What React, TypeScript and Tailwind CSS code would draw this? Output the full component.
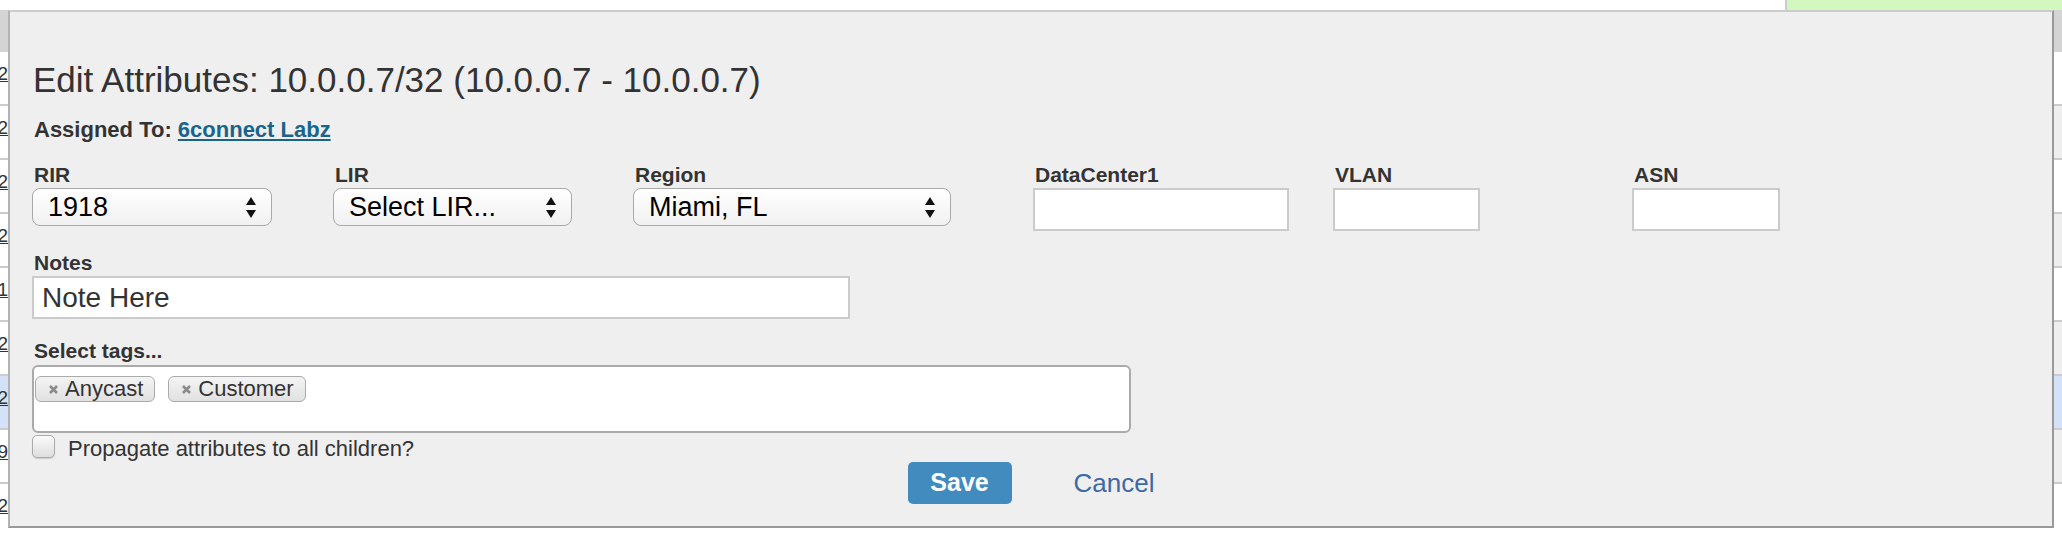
import type { ReactNode } from "react";

const rowDigits = ["2", "2", "2", "2", "1", "2", "2", "9", "2"];

const columns = [
  { label: "RIR", kind: "select", value: "1918", w: "w-[301px]", ctl: "w-[240px]" },
  { label: "LIR", kind: "select", value: "Select LIR...", w: "w-[300px]", ctl: "w-[239px]" },
  { label: "Region", kind: "select", value: "Miami, FL", w: "w-[400px]", ctl: "w-[318px]" },
  { label: "DataCenter1", kind: "input", value: "", w: "w-[300px]", ctl: "w-[256px]" },
  { label: "VLAN", kind: "input", value: "", w: "w-[299px]", ctl: "w-[147px]" },
  { label: "ASN", kind: "input", value: "", w: "w-[200px]", ctl: "w-[148px]" },
];

function Label({ children }: { children: ReactNode }) {
  return (
    <div className="h-[24px] pl-[2px] text-[21px] leading-[24px] font-bold text-[#333]">
      {children}
    </div>
  );
}

function UpDown() {
  return (
    <svg width="12" height="23" viewBox="0 0 12 23" className="shrink-0">
      <polygon points="6,1 11,9 1,9" fill="#111" />
      <polygon points="1,14 11,14 6,22" fill="#111" />
    </svg>
  );
}

function FakeSelect({ value, width }: { value: string; width: string }) {
  return (
    <div
      className={`${width} flex h-[38px] items-center justify-between rounded-[8px] border border-[#a9a9a9] bg-linear-to-b from-white to-[#f1f1f1] pl-[15px] pr-[14px] text-[27px] leading-none text-black`}
    >
      <span>{value}</span>
      <UpDown />
    </div>
  );
}

function Chip({ text }: { text: string }) {
  return (
    <div className="flex h-[26px] items-center gap-[6px] rounded-[6px] border border-[#aaaaaa] bg-linear-to-b from-[#f4f4f4] to-[#e1e1e1] pl-[12px] pr-[11px] text-[22px] leading-none text-[#333]">
      <svg width="11" height="11" viewBox="0 0 11 11">
        <path d="M2 2 L9 9 M9 2 L2 9" stroke="#8a8a8a" strokeWidth="2.6" />
      </svg>
      <span>{text}</span>
    </div>
  );
}

export default function App() {
  return (
    <div className="relative h-[536px] w-[2062px] overflow-hidden bg-white font-['Liberation_Sans',Arial,sans-serif]">
      {/* page behind the dialog */}
      <div className="flex h-[10px]">
        <div className="flex-1 bg-white" />
        <div className="w-[277px] border-l-2 border-[#cccccc] bg-[#d2f7bf]" />
      </div>
      <div className="h-[42px] bg-[#d4d4d4]" />
      {rowDigits.map((d, i) => (
        <div
          key={i}
          className={`flex h-[54px] border-b-2 border-[#cccccc] ${
            i === 6 ? "bg-[#d3e2f9]" : i % 2 === 1 ? "bg-[#eeeeee]" : "bg-white"
          }`}
        >
          <div
            className={`flex w-[8px] justify-end overflow-hidden whitespace-nowrap pt-[11px] text-[19px] leading-[22px] text-[#333] underline ${
              i === 6 ? "bg-[#d3e2f9]" : "bg-white"
            }`}
          >
            10.0.0.{d}
          </div>
          <div className="flex-1" />
        </div>
      ))}

      {/* dialog */}
      <div className="absolute left-[8px] top-[10px] z-10 h-[518px] w-[2046px] border-2 border-t-[#cccccc] border-l-[#b3b3b3] border-r-[#999999] border-b-[#999999] bg-[#efefef] pl-[22px] text-[#333]">
        <h2 className="mt-[47px] pl-[1px] text-[35px] leading-[42px] font-normal text-[#333]">
          Edit Attributes: 10.0.0.7/32 (10.0.0.7 - 10.0.0.7)
        </h2>
        <p className="mt-[17px] pl-[2px] text-[22px] leading-[24px] font-bold">
          Assigned To:{" "}
          <a href="#" className="text-[#19648a] underline">
            6connect Labz
          </a>
        </p>

        <div className="mt-[21px] flex">
          {columns.map((c) => (
            <div key={c.label} className={`${c.w} shrink-0`}>
              <Label>{c.label}</Label>
              <div className="mt-[1px]">
                {c.kind === "select" ? (
                  <FakeSelect value={c.value} width={c.ctl} />
                ) : (
                  <div className={`${c.ctl} h-[43px] border-2 border-[#cbcbcb] bg-white`} />
                )}
              </div>
            </div>
          ))}
        </div>

        <div className="mt-[20px]">
          <Label>Notes</Label>
          <div className="mt-[1px] flex h-[43px] w-[818px] items-center border-2 border-[#cbcbcb] bg-white pl-[8px] text-[28px] text-[#333]">
            Note Here
          </div>
        </div>

        <div className="mt-[20px]">
          <Label>Select tags...</Label>
          <div className="mt-[2px] h-[68px] w-[1099px] rounded-[6px] border-2 border-[#aaaaaa] bg-white pl-[1px] pt-[9px]">
            <div className="flex gap-[13px]">
              <Chip text="Anycast" />
              <Chip text="Customer" />
            </div>
          </div>
        </div>

        <label className="mt-[2px] flex h-[23px] items-start gap-[13px]">
          <span className="h-[23px] w-[23px] rounded-[5px] border border-[#aaaaaa] bg-linear-to-b from-[#fafafa] to-[#dedede] shadow-[0_1px_1px_rgba(0,0,0,0.15)]" />
          <span className="mt-[2px] text-[22px] leading-[23px] text-[#333]">
            Propagate attributes to all children?
          </span>
        </label>

        <div className="mt-[4px] flex justify-center gap-[50px] pr-[10px]">
          <button className="h-[42px] w-[104px] rounded-[5px] bg-[#418bbf] text-[25px] font-bold text-white">
            Save
          </button>
          <button className="h-[42px] px-[12px] text-[26px] text-[#3d69a6]">Cancel</button>
        </div>
      </div>
    </div>
  );
}
